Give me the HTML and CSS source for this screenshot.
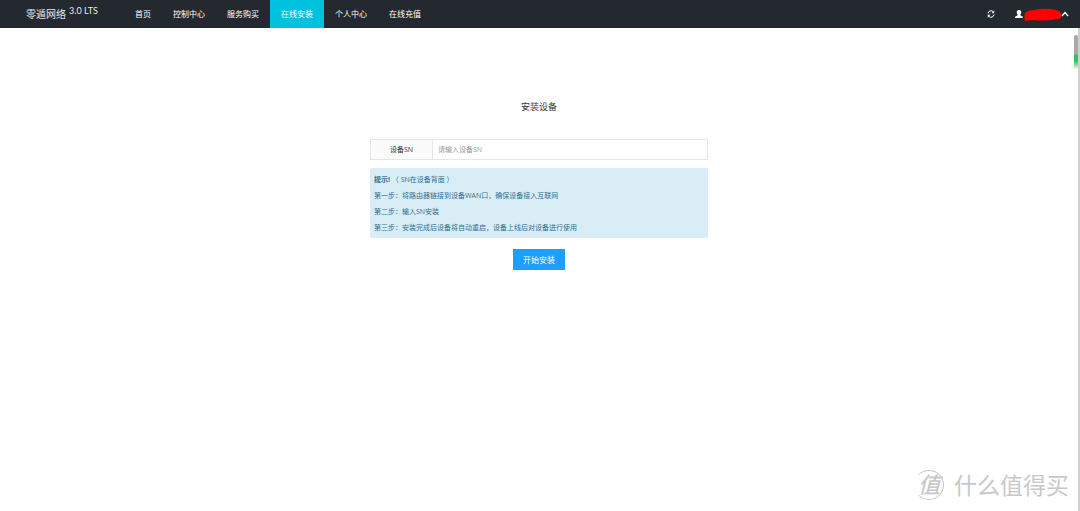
FILE: index.html
```html
<!DOCTYPE html>
<html lang="zh-CN">
<head>
<meta charset="utf-8">
<meta name="viewport" content="width=device-width, initial-scale=1">
<title>安装设备</title>
<link rel="stylesheet" href="styles.css">
</head>
<body>
<header class="topbar">
  <a class="brand" href="#">零遁网络 <sup class="version">3.0 LTS</sup></a>
  <nav class="nav">
    <a class="nav-link" href="#">首页</a>
    <a class="nav-link" href="#">控制中心</a>
    <a class="nav-link" href="#">服务购买</a>
    <a class="nav-link active" href="#" aria-current="page">在线安装</a>
    <a class="nav-link" href="#">个人中心</a>
    <a class="nav-link" href="#">在线充值</a>
  </nav>
  <div class="tools">
    <button class="tool" type="button" aria-label="刷新">
      <svg width="8" height="8" viewBox="0 0 16 16" fill="none" stroke="#fff" stroke-width="2"><path d="M2 7a6 6 0 0 1 10.500-3.500M14 9a6 6 0 0 1-10.500 3.500"/><path d="M14.500 1v5.500H9zM1.500 15V9.500H7z" fill="#fff" stroke="none"/></svg>
    </button>
    <button class="tool user" type="button" aria-label="用户菜单">
      <svg width="8" height="8" viewBox="0 0 16 16" fill="#fff"><path d="M8 0c2.900 0 4.500 1.800 4.500 4.500 0 2-.8 3.800-2 4.700v1.300l4 1.800c.9.400 1.300 1 1.300 2V16H.2v-1.700c0-1 .4-1.600 1.300-2l4-1.800V9.200c-1.200-.9-2-2.700-2-4.700C3.500 1.800 5.100 0 8 0z"/></svg>
      <svg width="38" height="13" viewBox="0 0 38 13" fill="#f00"><path d="M1 5Q4 2 10 2Q17 0 25 1Q34 1 37 5Q39 9 35 11Q31 11 28 12Q17 13 9 12L1 13Q0 8 1 5z"/></svg>
      <svg width="8" height="8" viewBox="0 0 8 8" fill="none" stroke="#fff" stroke-width="1.400"><path d="M1 6l3-3.500L7 6"/></svg>
    </button>
  </div>
</header>
<main class="page">
  <form class="install">
    <h1 class="title">安装设备</h1>
    <div class="field">
      <label class="field-label" for="sn">设备SN</label>
      <input class="field-input" id="sn" type="text" placeholder="请输入设备SN">
    </div>
    <div class="hint">
      <p><strong>提示!</strong> （ SN在设备背面 ）</p>
      <p>第一步：将路由器链接到设备WAN口，确保设备接入互联网</p>
      <p>第二步：输入SN安装</p>
      <p>第三步：安装完成后设备将自动重启，设备上线后对设备进行使用</p>
    </div>
    <button class="submit" type="button">开始安装</button>
  </form>
</main>
<div class="scroll-thumb"></div>
<div class="watermark">
  <span class="seal">值</span>
  <span>什么值得买</span>
</div>
</body>
</html>
```
FILE: styles.css
```css
* {
  box-sizing: border-box;
}

body {
  margin: 0;
  min-height: 100vh;
  display: flex;
  flex-direction: column;
  background: #fff;
  color: #333;
  font: 8px/16px "Open Sans", "Noto Sans CJK SC", sans-serif;
}

a {
  color: inherit;
  text-decoration: none;
}

button,
input {
  font: inherit;
  border: 0;
  border-radius: 0;
  padding: 0;
}

.topbar {
  display: flex;
  height: 28px;
  background: #23292e;
  color: #fff;
  line-height: 28px;
}

.brand {
  width: 124px;
  display: flex;
  justify-content: center;
  gap: 3px;
  font-size: 10px;
  color: #e8e8e8;
}

.version {
  font-family: Lato, sans-serif;
  font-size: 9px;
  line-height: 22px;
  vertical-align: baseline;
}

.nav {
  display: flex;
}

.nav-link {
  padding: 0 11px;
}

.nav-link.active {
  background: #00c1de;
}

.tools {
  display: flex;
  align-items: center;
  gap: 20px;
  margin-left: auto;
  padding-right: 11px;
}

.tool {
  display: flex;
  align-items: center;
  background: none;
  cursor: pointer;
}

.user {
  gap: 1px;
}

.user svg:last-child {
  margin-left: -2px;
}

.page {
  flex: 1;
  padding: 71px 16px 16px;
  border-right: 2px solid #d0d0d0;
}

.install {
  display: flex;
  flex-direction: column;
  align-items: center;
  max-width: 338px;
  margin: 0 auto;
}

.title {
  margin: 0 0 24px;
  font-size: 9px;
  font-weight: 400;
  line-height: 16px;
}

.field {
  display: flex;
  width: 100%;
  height: 21px;
  margin-bottom: 8px;
  border: 1px solid #e6e6e6;
  font-size: 7px;
}

.field-label {
  width: 62px;
  background: #fbfbfb;
  border-right: 1px solid #e6e6e6;
  line-height: 20px;
  text-align: center;
}

.field-input {
  flex: 1;
  min-width: 0;
  padding: 0 5px;
  background: #fff;
  color: #333;
}

.field-input::placeholder {
  color: #999;
}

.hint {
  width: 100%;
  margin-bottom: 11px;
  padding: 4px 4px 2px;
  border-radius: 2px;
  background: #d9edf7;
  color: #31708f;
  font-size: 7px;
}

.hint p {
  margin: 0;
}

.submit {
  height: 21px;
  padding: 0 10px;
  background: #1e9fff;
  color: #fff;
  cursor: pointer;
}

.scroll-thumb {
  position: absolute;
  top: 35px;
  right: 2px;
  width: 4px;
  height: 34px;
  border-radius: 2px;
  background: linear-gradient(#a9a9a9 0 19px, #2fc45c 20px 26px, #e4f8e9 34px);
}

.watermark {
  position: absolute;
  right: 11px;
  bottom: 10px;
  display: flex;
  align-items: center;
  gap: 10px;
  color: #c8c8c8;
  font-size: 23px;
  line-height: 32px;
}

.seal {
  width: 30px;
  height: 30px;
  border: 1px solid #c8c8c8;
  border-left-color: transparent;
  border-radius: 50%;
  font-size: 22px;
  font-weight: 500;
  font-style: italic;
  line-height: 26px;
  text-align: center;
}
```
